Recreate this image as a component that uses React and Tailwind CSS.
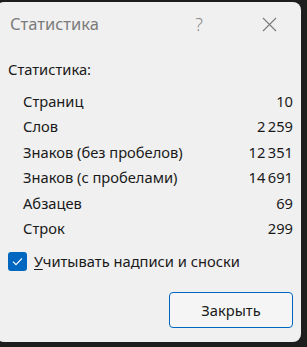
import React from 'react';

const rows = [
  ['Страниц', '10'],
  ['Слов', '2\u202F259'],
  ['Знаков (без пробелов)', '12\u202F351'],
  ['Знаков (с пробелами)', '14\u202F691'],
  ['Абзацев', '69'],
  ['Строк', '299'],
];

export default function App() {
  return (
    <div
      className="w-[307px] h-[347px] bg-[#1e1e1e] overflow-hidden pt-[2px]"
      style={{ fontFamily: '"Segoe UI", "Noto Sans", "Open Sans", sans-serif' }}
    >
      <div className="ml-[-4px] w-[305px] h-[340px] bg-[#f0f0f0] rounded-[8px] flex flex-col text-[#1a1a1a]">
        {/* title bar */}
        <div className="h-[45px] flex items-center pl-[14px] pr-[24px]">
          <span className="text-[16.5px] text-[#7b7b7b] flex-1">Статистика</span>
          <span className="text-[18px] text-[#8a8a8a] font-light mr-[59px]">?</span>
          <svg width="15" height="15" viewBox="0 0 15 15" className="text-[#7b7b7b]">
            <path d="M1 1 L14 14 M14 1 L1 14" stroke="currentColor" strokeWidth="1.1" />
          </svg>
        </div>

        <div className="pl-[12px] pr-[8px] flex flex-col text-[14.7px]">
          <div className="leading-[18px] mt-[13px]">Статистика:</div>
          <div className="mt-[10px] flex flex-col">
            {rows.map(([label, value]) => (
              <div key={label} className="h-[25.5px] flex items-center justify-between pl-[15px]">
                <span>{label}</span>
                <span>{value}</span>
              </div>
            ))}
          </div>

          <div className="mt-[9px] flex items-center gap-[7px]">
            <div className="w-[19px] h-[19px] rounded-[3px] bg-[#0067c0] flex items-center justify-center">
              <svg width="11" height="9" viewBox="0 0 11 9">
                <path d="M1 4.6 L4 7.6 L10 1.4" fill="none" stroke="white" strokeWidth="1.2" />
              </svg>
            </div>
            <span>
              <span className="underline underline-offset-2">У</span>читывать надписи и сноски
            </span>
          </div>

          <div className="flex justify-end mt-[20px]">
            <button className="w-[124px] h-[36px] rounded-[4px] border border-[#0067c0] bg-[#f5f5f5] text-[#1a1a1a]">
              Закрыть
            </button>
          </div>
        </div>
      </div>
    </div>
  );
}
